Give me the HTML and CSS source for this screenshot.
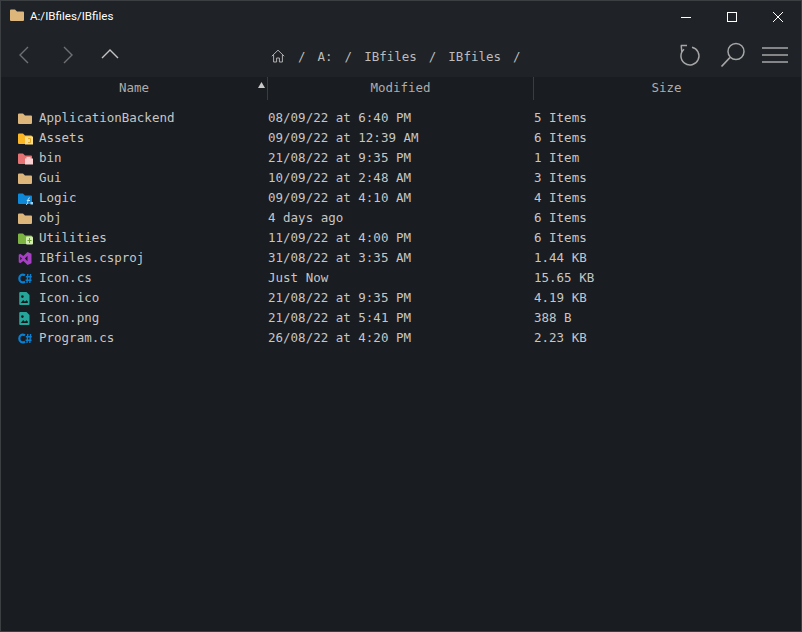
FILE: index.html
```html
<!DOCTYPE html>
<html lang="en">
<head>
<meta charset="utf-8">
<title>A:/IBfiles/IBfiles</title>
<link rel="stylesheet" href="styles.css">
</head>
<body>
<div class="window">
  <header class="titlebar">
    <svg class="title-icon" width="15" height="13" viewBox="0 0 15 13"><path fill="#dcb67a" d="M0 1.500a1 1 0 0 1 1-1h4l2 2h6a1 1 0 0 1 1 1v7.500a1 1 0 0 1-1 1H1a1 1 0 0 1-1-1z"/></svg>
    <span class="title-text">A:/IBfiles/IBfiles</span>
    <div class="win-controls">
      <button class="win-btn"><svg width="12" height="12" viewBox="0 0 12 12"><path d="M1 6.500h10" stroke="#fff" fill="none"/></svg></button>
      <button class="win-btn"><svg width="12" height="12" viewBox="0 0 12 12"><rect x="1.500" y="1.500" width="9" height="9" stroke="#fff" fill="none"/></svg></button>
      <button class="win-btn"><svg width="12" height="12" viewBox="0 0 12 12"><path d="M1 1l10 10M11 1L1 11" stroke="#fff" fill="none"/></svg></button>
    </div>
  </header>
  <nav class="toolbar">
    <div class="nav-group">
      <svg class="nav-icon" width="12" height="20" viewBox="0 0 12 20"><path d="M10 2L2 10l8 8" stroke="#6e7073" stroke-width="1.400" fill="none"/></svg>
      <svg class="nav-icon" width="12" height="20" viewBox="0 0 12 20"><path d="M2 2l8 8-8 8" stroke="#6e7073" stroke-width="1.400" fill="none"/></svg>
      <svg class="nav-icon" width="18" height="12" viewBox="0 0 18 12"><path d="M1 10l8-8 8 8" stroke="#c4c4c4" stroke-width="1.400" fill="none"/></svg>
    </div>
    <div class="crumbs">
      <svg width="14" height="14" viewBox="0 0 14 14"><path d="M.8 7.200L7 1.200l6.200 6M2.600 6v7h3V9h2.800v4h3V6" stroke="#b0b0b0" fill="none"/></svg>
      <span>/</span><span>A:</span><span>/</span><span>IBfiles</span><span>/</span><span>IBfiles</span><span>/</span>
    </div>
    <div class="tools">
      <svg width="22" height="24" viewBox="0 0 22 24"><path d="M5 6.200A9 9 0 1 0 13 4.200M1.800 2.500H8M2.200 2.500l.6 6.500" stroke="#a6a6a6" stroke-width="1.500" fill="none"/></svg>
      <svg width="26" height="26" viewBox="0 0 26 26"><circle cx="16" cy="9.500" r="8" stroke="#a6a6a6" stroke-width="1.500" fill="none"/><path d="M10 15.500L1.500 24.500" stroke="#a6a6a6" stroke-width="1.800" fill="none"/></svg>
      <svg width="26" height="16" viewBox="0 0 26 16"><path d="M0 1h26M0 8h26M0 15h26" stroke="#a6a6a6" stroke-width="1.500" fill="none"/></svg>
    </div>
  </nav>
  <div class="head-row">
    <div class="head-cell head-name">Name<svg class="sort" width="7" height="6" viewBox="0 0 7 6"><path d="M3.500 0L7 6H0z" fill="#c8c8c8"/></svg></div>
    <div class="head-cell head-mod">Modified</div>
    <div class="head-cell head-size">Size</div>
  </div>
  <main class="list">
    <div class="row"><div class="name"><svg class="ico" viewBox="0 0 15 13"><use href="#f"/></svg>ApplicationBackend</div><div>08/09/22 at 6:40 PM</div><div>5 Items</div></div>
    <div class="row"><div class="name"><svg class="ico" viewBox="0 0 15 13"><use href="#f" class="tint-yellow"/><rect x="7" y="4.500" width="8" height="8" fill="#fdde8c"/><path d="M10 6.500h2.500v4H10" stroke="#e9a825" fill="none"/></svg>Assets</div><div>09/09/22 at 12:39 AM</div><div>6 Items</div></div>
    <div class="row"><div class="name"><svg class="ico" viewBox="0 0 15 13"><use href="#f" class="tint-red"/><path fill="#fbd0d0" d="M7 6.500h1.500V5h4v1.500H15v6H7z"/></svg>bin</div><div>21/08/22 at 9:35 PM</div><div>1 Item</div></div>
    <div class="row"><div class="name"><svg class="ico" viewBox="0 0 15 13"><use href="#f"/></svg>Gui</div><div>10/09/22 at 2:48 AM</div><div>3 Items</div></div>
    <div class="row"><div class="name"><svg class="ico" viewBox="0 0 15 13"><use href="#f" class="tint-blue"/><path d="M8 12.500c1.500 0 1.500-1 1.800-3l.4-2.500c.2-1 1-1.200 1.800-1M8.800 8.500H12" stroke="#bfe3ff" fill="none"/><rect x="12.500" y="10" width="2.500" height="2.500" fill="#9dd2f7"/></svg>Logic</div><div>09/09/22 at 4:10 AM</div><div>4 Items</div></div>
    <div class="row"><div class="name"><svg class="ico" viewBox="0 0 15 13"><use href="#f"/></svg>obj</div><div>4 days ago</div><div>6 Items</div></div>
    <div class="row"><div class="name"><svg class="ico" viewBox="0 0 15 13"><use href="#f" class="tint-green"/><rect x="8" y="4.500" width="7" height="8" rx="1" fill="#d3ecb0"/><path d="M11.500 6v5M9.500 8.500h4" stroke="#6a9c30" fill="none"/></svg>Utilities</div><div>11/09/22 at 4:00 PM</div><div>6 Items</div></div>
    <div class="row"><div class="name"><svg class="ico" viewBox="0 0 15 13"><path fill="#a63fc4" d="M9.500 0L13.500 1.800v9.400L9.500 13 5.300 9l-3 2.300L.7 10.300V2.700l1.600-1 3 2.300zM2.300 4.800v3.400L4 6.500zM9.500 3.800L6.800 6.500l2.700 2.700z"/></svg>IBfiles.csproj</div><div>31/08/22 at 3:35 AM</div><div>1.44 KB</div></div>
    <div class="row"><div class="name"><svg class="ico" viewBox="0 0 15 13"><use href="#cs"/></svg>Icon.cs</div><div>Just Now</div><div>15.65 KB</div></div>
    <div class="row"><div class="name"><svg class="ico" viewBox="0 0 15 13"><use href="#img"/></svg>Icon.ico</div><div>21/08/22 at 9:35 PM</div><div>4.19 KB</div></div>
    <div class="row"><div class="name"><svg class="ico" viewBox="0 0 15 13"><use href="#img"/></svg>Icon.png</div><div>21/08/22 at 5:41 PM</div><div>388 B</div></div>
    <div class="row"><div class="name"><svg class="ico" viewBox="0 0 15 13"><use href="#cs"/></svg>Program.cs</div><div>26/08/22 at 4:20 PM</div><div>2.23 KB</div></div>
  </main>
</div>
<svg class="defs" width="0" height="0">
  <defs>
    <path id="f" d="M0 2.500a1 1 0 0 1 1-1h4l2 2h6a1 1 0 0 1 1 1v6.500a1 1 0 0 1-1 1H1a1 1 0 0 1-1-1z"/>
    <g id="cs" fill="none" stroke="#0b7fd0">
      <path stroke-width="2.200" d="M7 3.300C3.800 1.500 1.300 3.400 1.300 6.500s2.500 5 5.700 3.200"/>
      <path stroke-width="1.400" d="M9.800 2l-.8 9M12.600 2l-.8 9M7.800 4.800h6M7.600 8.200h6"/>
    </g>
    <g id="img">
      <path fill="#26a69a" d="M2.200 0h6.300l3 3v9a1 1 0 0 1-1 1H2.200a1 1 0 0 1-1-1V1a1 1 0 0 1 1-1z"/>
      <path fill="#17191c" d="M2.700 11l2.500-3 1.700 1.700L8.500 8.200l1.300 1.300V11z"/>
      <circle cx="4.400" cy="4.600" r="1.300" fill="#17191c"/>
    </g>
  </defs>
</svg>
</body>
</html>
```
FILE: styles.css
```css
* { box-sizing: border-box; }
html, body { margin: 0; height: 100%; background: #1c1f23; }
.window {
  width: 802px; height: 632px; display: flex; flex-direction: column;
  background: #191c20; border: 1px solid #3c3f42; overflow: hidden;
  color: #c6c6c6; font: 12.5px/20px "DejaVu Sans Mono", monospace;
}
.titlebar { height: 31px; flex: none; display: flex; align-items: center; padding-left: 9px; background: #1f2226; }
.title-icon { margin-top: -3px; }
.title-text { margin-left: 5px; margin-top: -2px; font: 11.600px/16px Roboto, sans-serif; color: #fff; }
.win-controls { margin-left: auto; display: flex; }
.win-btn { width: 46px; height: 30px; padding: 0; border: 0; background: none; display: flex; align-items: center; justify-content: center; }
.win-btn svg { display: block; }
.toolbar { height: 45px; flex: none; display: flex; align-items: center; background: #1f2226; }
.nav-group { width: 270px; padding-left: 17px; display: flex; align-items: center; }
.nav-group .nav-icon:nth-child(2) { margin-left: 32px; }
.nav-group .nav-icon:nth-child(3) { margin-left: 27px; margin-top: -1px; }
.crumbs { display: flex; align-items: center; gap: 12px; flex: 1; margin-top: 5px; color: #bcbcbc; }
.crumbs svg { margin-right: 1px; margin-top: -3px; }
.tools { display: flex; align-items: center; padding-right: 13px; }
.tools svg:nth-child(2) { margin-left: 19px; margin-right: 16px; }
.head-row { height: 23px; flex: none; display: grid; grid-template-columns: 266px 266px 1fr; background: #191c20; color: #adadad; line-height: 21px; }
.head-cell { position: relative; text-align: center; }
.head-mod, .head-size { border-left: 1px solid #3a3d40; }
.head-size { padding-right: 2px; }
.sort { position: absolute; right: 2px; top: 5px; }
.list { padding-top: 8px; }
.row { height: 20px; display: grid; grid-template-columns: 267px 266px 1fr; }
.name { display: flex; align-items: center; padding-left: 17px; }
.ico { width: 15px; height: 13px; margin-right: 6px; flex: none; fill: #dcb67a; }
.tint-yellow { fill: #fbb726; }
.tint-red { fill: #e57373; }
.tint-blue { fill: #0f88d8; }
.tint-green { fill: #7cb342; }
.defs { position: absolute; }
```
